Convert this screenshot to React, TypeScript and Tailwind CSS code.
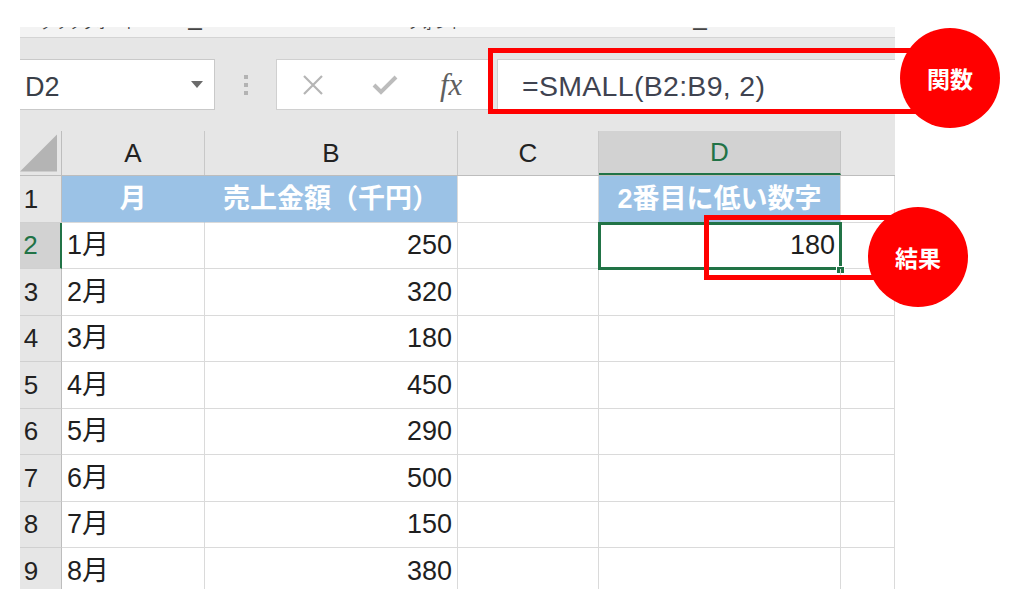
import React from "react";

const COLS = [42, 143, 253, 141, 242, 54];
const ROW_H = [47, 46, 47, 46, 47, 46, 47, 46, 47];

const data: [string, string][] = [
  ["1月", "250"],
  ["2月", "320"],
  ["3月", "180"],
  ["4月", "450"],
  ["5月", "290"],
  ["6月", "500"],
  ["7月", "150"],
  ["8月", "380"],
];

const font = "font-['Liberation_Sans','Noto_Sans_CJK_JP',sans-serif]";

function ColHeader() {
  const letters = ["A", "B", "C", "D"];
  return (
    <div className="flex h-[45px] bg-[#e6e6e6] border-b border-[#bdbdbd]">
      <div className="w-[42px] h-full border-r border-[#bdbdbd] flex items-end justify-end pr-[4px] pb-[3px]">
        <svg width="38" height="38" viewBox="0 0 38 38">
          <polygon points="38,0 38,38 0,38" fill="#b4b4b4" />
        </svg>
      </div>
      {letters.map((l, i) => {
        const sel = l === "D";
        return (
          <div
            key={l}
            style={{ width: COLS[i + 1] }}
            className={
              "h-full flex items-center justify-center text-[26px] border-r " +
              (sel
                ? "bg-[#d2d2d2] text-[#217346] border-[#c4c4c4] border-b-[2px] border-b-[#217346]"
                : "text-[#222] border-[#c8c8c8]")
            }
          >
            {l}
          </div>
        );
      })}
      <div className="flex-1 h-full" />
    </div>
  );
}

function RowHead({ n }: { n: number }) {
  const sel = n === 2;
  return (
    <div
      className={
        "w-[42px] h-full shrink-0 flex items-center justify-center pr-[19px] text-[26px] border-b border-[#d0d0d0] " +
        (sel
          ? "bg-[#d2d2d2] text-[#217346] border-r-[2px] border-r-[#217346]"
          : "bg-[#e6e6e6] text-[#222] border-r border-r-[#bdbdbd]")
      }
    >
      {n}
    </div>
  );
}

function Cell({
  w,
  children,
  className = "",
}: {
  w: number;
  children?: React.ReactNode;
  className?: string;
}) {
  return (
    <div
      style={{ width: w }}
      className={"h-full shrink-0 flex items-center border-r border-b border-[#dadada] " + className}
    >
      {children}
    </div>
  );
}

export default function App() {
  return (
    <div className={"w-[1024px] h-[589px] bg-white overflow-hidden relative " + font}>
      <div className="pt-[27px] pl-[20px] w-[895px]">
        {/* ribbon remnant */}
        <div className="h-[11px] bg-[#f3f3f3] border-b border-[#d4d4d4] overflow-hidden">
          <div className="flex -mt-[12px] text-[14px] leading-[16px] text-[#444] whitespace-nowrap">
            <span className="ml-[20px]">クリップボード</span>
            <span className="ml-[50px]">▁</span>
            <span className="ml-[205px]">フォント</span>
            <span className="ml-[230px]">▁</span>
            <span className="ml-[150px]">▪</span>
          </div>
        </div>

        {/* formula bar */}
        <div className="h-[93px] bg-[#e6e6e6] flex items-start pt-[21px]">
          <div className="w-[195px] h-[51px] bg-white border border-l-0 border-[#c9c9c9] flex items-center justify-between pl-[5px] pr-[11px]">
            <span className="text-[27px] text-[#3a3f48] pt-[6px]">D2</span>
            <svg width="12" height="7" viewBox="0 0 12 7">
              <polygon points="0,0 12,0 6,7" fill="#6b6b6b" />
            </svg>
          </div>
          <div className="w-[61px] h-[51px] flex flex-col items-center justify-center gap-[4px]">
            <div className="w-[4px] h-[4px] bg-[#b3b3b3]" />
            <div className="w-[4px] h-[4px] bg-[#b3b3b3]" />
            <div className="w-[4px] h-[4px] bg-[#b3b3b3]" />
          </div>
          <div className="w-[214px] h-[51px] bg-white border border-[#d0d0d0] flex items-center">
            <svg className="ml-[25px]" width="22" height="22" viewBox="0 0 22 22">
              <path d="M2 2 L20 20 M20 2 L2 20" stroke="#b5b5b5" strokeWidth="2.2" />
            </svg>
            <svg className="ml-[48px]" width="26" height="22" viewBox="0 0 26 22">
              <path d="M2 11 L9 18 L24 3" stroke="#bcbcbc" strokeWidth="4" fill="none" />
            </svg>
            <span className="ml-[42px] text-[31px] italic text-[#5f5f5f] font-['Liberation_Serif',serif] leading-none">
              fx
            </span>
          </div>
          <div className="ml-[7px] flex-1 h-[51px] bg-white border border-r-0 border-[#d0d0d0] flex items-center pl-[24px]">
            <span className="text-[28.5px] text-[#3f4350] tracking-[0.3px] pt-[3px]">=SMALL(B2:B9, 2)</span>
          </div>
        </div>

        {/* grid */}
        <ColHeader />
        {/* row 1 */}
        <div className="flex" style={{ height: ROW_H[0] }}>
          <RowHead n={1} />
          <Cell w={COLS[1]} className="bg-[#9bc2e6] border-r-[#9bc2e6] justify-center text-white font-bold text-[27px]">
            月
          </Cell>
          <Cell w={COLS[2]} className="bg-[#9bc2e6] justify-center text-white font-bold text-[27px]">
            売上金額（千円）
          </Cell>
          <Cell w={COLS[3]} />
          <Cell w={COLS[4]} className="bg-[#9bc2e6] justify-center text-white font-bold text-[27px] whitespace-nowrap">
            2番目に低い数字
          </Cell>
          <Cell w={COLS[5]} />
        </div>
        {data.map(([m, v], i) => {
          const n = i + 2;
          return (
            <div key={n} className="flex" style={{ height: ROW_H[i + 1] }}>
              <RowHead n={n} />
              <Cell w={COLS[1]} className="pl-[5px] text-[27px] text-[#1f1f1f]">
                {m}
              </Cell>
              <Cell w={COLS[2]} className="justify-end pr-[5px] text-[27px] text-[#1f1f1f]">
                {v}
              </Cell>
              <Cell w={COLS[3]} />
              <Cell w={COLS[4]} className="relative justify-end pr-[5px] text-[27px] text-[#1f1f1f]">
                {n === 2 && (
                  <>
                    <span>180</span>
                    <div className="absolute -top-[1px] -left-[1px] -right-[2px] -bottom-[2px] border-[3px] border-[#217346]" />
                    <div className="absolute -right-[5px] -bottom-[6px] w-[9px] h-[8px] bg-[#217346] border border-white" />
                  </>
                )}
              </Cell>
              <Cell w={COLS[5]} />
            </div>
          );
        })}
      </div>

      {/* annotations */}
      <div className="absolute left-[488px] top-[48px] w-[442px] h-[66px] border-[5px] border-[#ff0000]" />
      <div className="absolute left-[704px] top-[215px] w-[196px] h-[65px] border-[5px] border-[#ff0000]" />
      <div className="absolute left-[900px] top-[28px] w-[100px] h-[100px] rounded-full bg-[#ff0000] flex items-center justify-center text-white font-bold text-[23px] font-['Noto_Sans_CJK_JP',sans-serif]">
        関数
      </div>
      <div className="absolute left-[868px] top-[207px] w-[100px] h-[100px] rounded-full bg-[#ff0000] flex items-center justify-center text-white font-bold text-[23px] font-['Noto_Sans_CJK_JP',sans-serif]">
        結果
      </div>
    </div>
  );
}
